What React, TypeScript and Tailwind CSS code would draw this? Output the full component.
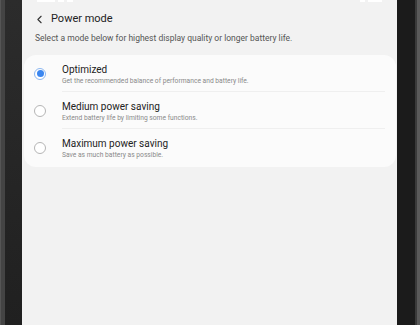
import { ChevronLeft } from "lucide-react";

type Mode = { title: string; desc: string; selected?: boolean };

const modes: Mode[] = [
  { title: "Optimized", desc: "Get the recommended balance of performance and battery life.", selected: true },
  { title: "Medium power saving", desc: "Extend battery life by limiting some functions." },
  { title: "Maximum power saving", desc: "Save as much battery as possible." },
];

function Radio({ on }: { on?: boolean }) {
  if (on)
    return (
      <span className="flex h-[12px] w-[12px] items-center justify-center rounded-full border border-[#8db7f0] bg-white">
        <span className="h-[7px] w-[7px] rounded-full bg-[#3a86f0]" />
      </span>
    );
  return <span className="block h-[12px] w-[12px] rounded-full border border-[#b5b5b5] bg-white" />;
}

export default function App() {
  return (
    <div className="flex h-[325px] w-[420px] overflow-hidden bg-[#222]" style={{ fontFamily: "Roboto, sans-serif" }}>
      {/* left bezel */}
      <div className="flex w-[22px] shrink-0">
        <div className="w-[1px] bg-[#555]" />
        <div className="w-[4px] bg-[#444]" />
        <div className="flex-1 bg-gradient-to-b from-[#2c2c2c] to-[#202020]" />
      </div>

      {/* screen */}
      <div className="flex w-[375px] shrink-0 flex-col bg-[#f2f2f2]">
        {/* status bar, mostly cut off */}
        <div className="flex h-[4px] items-start justify-between px-[15px]">
          <div className="flex gap-[3px]">
            <span className="h-[2px] w-[18px] bg-white" />
            <span className="h-[2px] w-[6px] bg-white" />
            <span className="h-[2px] w-[6px] bg-white" />
          </div>
          <div className="flex gap-[3px]">
            <span className="h-[2px] w-[5px] bg-white" />
            <span className="h-[2px] w-[14px] bg-white" />
          </div>
        </div>
        <div className="mt-[7px] flex items-center">
          <ChevronLeft className="ml-[11px] h-[13px] w-[13px] text-[#333]" strokeWidth={2} />
          <span className="ml-[5px] text-[11px] text-[#222]">Power mode</span>
        </div>
        <div className="ml-[13px] mt-[4px] text-[8.5px] text-[#555]">
          Select a mode below for highest display quality or longer battery life.
        </div>
        <div className="ml-[2px] mr-[1px] mt-[11px] rounded-[12px] bg-[#fbfbfb] pb-[1px]">
          {modes.map((m, i) => (
            <div key={i} className="flex h-[37px] items-center">
              <div className="flex w-[38px] shrink-0 justify-start pl-[10px]">
                <Radio on={m.selected} />
              </div>
              <div
                className={
                  "h-full flex-1 pt-[9px] mr-[11px] " +
                  (i < modes.length - 1 ? "border-b border-[#efefef]" : "")
                }
              >
                <div className="text-[10px] leading-[12px] text-[#222]">{m.title}</div>
                <div className="mt-[1px] text-[6.7px] leading-[8px] text-[#8a8a8a]">{m.desc}</div>
              </div>
            </div>
          ))}
        </div>
      </div>

      {/* right bezel */}
      <div className="flex flex-1">
        <div className="flex-1 bg-[#1b1b1b]" />
        <div className="w-[2px] bg-[#3a3a3a]" />
        <div className="w-[3px] bg-[#5a5a5a]" />
      </div>
    </div>
  );
}
